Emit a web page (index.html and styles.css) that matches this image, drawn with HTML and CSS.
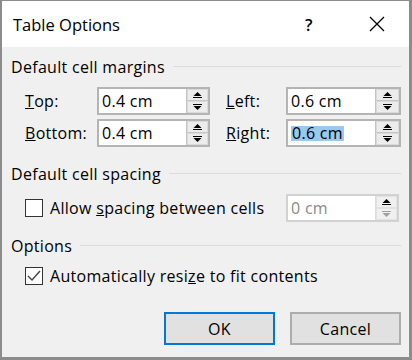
FILE: index.html
```html
<!DOCTYPE html>
<html>
<head>
<meta charset="utf-8">
<link rel="stylesheet" href="styles.css">
</head>
<body>
<div class="window">
  <div class="titlebar">
    <span class="title">Table Options</span>
    <span class="help">?</span>
    <span class="close">
      <svg width="16" height="16" viewBox="0 0 16 16"><path d="M1 1 L15 15 M15 1 L1 15" stroke="#000" stroke-width="1.3" fill="none"/></svg>
    </span>
  </div>
  <div class="content">
    <div class="group-head"><span>Default cell margins</span><i class="rule"></i></div>
    <div class="margins">
      <label class="lbl"><u>T</u>op:</label>
      <div class="spin w113"><span class="val">0.4 cm</span><div class="spin-btns"><b class="up"><svg width="9" height="6" viewBox="0 0 9 6"><path d="M0.5 4 L4.5 0 L8.5 4 Z" fill="#000"/><rect x="0" y="5" width="9" height="1" fill="#000"/></svg></b><b class="down"><svg width="9" height="6" viewBox="0 0 9 6"><rect x="0" y="0" width="9" height="1" fill="#000"/><path d="M0.5 2 L4.5 6 L8.5 2 Z" fill="#000"/></svg></b></div></div>
      <label class="lbl lbl2"><u>L</u>eft:</label>
      <div class="spin w115"><span class="val">0.6 cm</span><div class="spin-btns"><b class="up"><svg width="9" height="6" viewBox="0 0 9 6"><path d="M0.5 4 L4.5 0 L8.5 4 Z" fill="#000"/><rect x="0" y="5" width="9" height="1" fill="#000"/></svg></b><b class="down"><svg width="9" height="6" viewBox="0 0 9 6"><rect x="0" y="0" width="9" height="1" fill="#000"/><path d="M0.5 2 L4.5 6 L8.5 2 Z" fill="#000"/></svg></b></div></div>
      <label class="lbl"><u>B</u>ottom:</label>
      <div class="spin w113"><span class="val">0.4 cm</span><div class="spin-btns"><b class="up"><svg width="9" height="6" viewBox="0 0 9 6"><path d="M0.5 4 L4.5 0 L8.5 4 Z" fill="#000"/><rect x="0" y="5" width="9" height="1" fill="#000"/></svg></b><b class="down"><svg width="9" height="6" viewBox="0 0 9 6"><rect x="0" y="0" width="9" height="1" fill="#000"/><path d="M0.5 2 L4.5 6 L8.5 2 Z" fill="#000"/></svg></b></div></div>
      <label class="lbl lbl2"><u>R</u>ight:</label>
      <div class="spin w115 focused"><span class="val"><span class="sel">0.6 cm</span></span><div class="spin-btns"><b class="up"><svg width="9" height="6" viewBox="0 0 9 6"><path d="M0.5 4 L4.5 0 L8.5 4 Z" fill="#000"/><rect x="0" y="5" width="9" height="1" fill="#000"/></svg></b><b class="down"><svg width="9" height="6" viewBox="0 0 9 6"><rect x="0" y="0" width="9" height="1" fill="#000"/><path d="M0.5 2 L4.5 6 L8.5 2 Z" fill="#000"/></svg></b></div></div>
    </div>

    <div class="group-head g2"><span>Default cell spacing</span><i class="rule"></i></div>
    <div class="check-row">
      <span class="checkbox"></span>
      <span class="check-label">Allow <u>s</u>pacing between cells</span>
      <div class="spin w113 disabled"><span class="val">0 cm</span><div class="spin-btns"><b class="up"><svg width="9" height="6" viewBox="0 0 9 6"><path d="M0.5 4 L4.5 0 L8.5 4 Z" fill="#000"/><rect x="0" y="5" width="9" height="1" fill="#000"/></svg></b><b class="down"><svg width="9" height="6" viewBox="0 0 9 6"><rect x="0" y="0" width="9" height="1" fill="#a0a0a0"/><path d="M0.5 2 L4.5 6 L8.5 2 Z" fill="#a0a0a0"/></svg></b></div></div>
    </div>

    <div class="group-head g3"><span>Options</span><i class="rule"></i></div>
    <div class="check-row r2">
      <span class="checkbox checked"><svg width="14" height="12" viewBox="0 0 14 12"><path d="M1 6 L5 10 L13 1" stroke="#444" stroke-width="1.4" fill="none"/></svg></span>
      <span class="check-label">Automatically resi<u>z</u>e to fit contents</span>
    </div>

    <div class="buttons">
      <button class="btn default">OK</button>
      <button class="btn">Cancel</button>
    </div>
  </div>
</div>
</body>
</html>
```

FILE: styles.css
```css
* { box-sizing: border-box; }
html, body { margin: 0; padding: 0; }
body {
  width: 412px;
  height: 360px;
  font-family: "Open Sans", "Noto Sans", sans-serif;
  font-size: 16px;
  letter-spacing: 0.3px;
  color: #000;
  background: #fff;
}
.window {
  width: 412px;
  height: 360px;
  border: 1px solid #8c8c8c;
  border-left-width: 2px;
  border-right-width: 3px;
  border-bottom-width: 3px;
  display: flex;
  flex-direction: column;
}
.titlebar {
  height: 46px;
  background: #fff;
  display: flex;
  align-items: center;
  padding-left: 11px;
}
.title {
  font-size: 16.5px;
  letter-spacing: 0;
  flex: 1;
}
.help {
  font-size: 16.5px;
  font-weight: 600;
  width: 14px;
  margin-right: 50px;
}
.close {
  width: 16px;
  height: 16px;
  margin-right: 24px;
  display: flex;
}
.content {
  flex: 1;
  background: #f0f0f0;
  padding: 10px 8px 0 9px;
}
.group-head {
  display: flex;
  align-items: center;
  height: 20px;
  line-height: 20px;
}
.group-head .rule {
  flex: 1;
  height: 1px;
  background: #dcdcdc;
  margin-left: 8px;
  margin-top: -2px;
}
.margins {
  display: grid;
  grid-template-columns: 72px 113px 76px 115px;
  row-gap: 4px;
  margin-top: 10px;
  padding-left: 14px;
}
.lbl {
  display: flex;
  align-items: center;
  height: 28px;
}
.lbl2 { margin-left: 16px; }
.spin {
  height: 28px;
  border: 2px solid #b4b4b4;
  background: #fff;
  display: flex;
}
.w113 { width: 113px; }
.w115 { width: 115px; }
.spin .val {
  flex: 1;
  display: flex;
  align-items: center;
  padding-left: 3px;
}
.sel {
  background: #99c9ef;
  padding: 0 1px;
  line-height: 15px;
}
.spin-btns {
  width: 22px;
  display: flex;
  flex-direction: column;
  border-left: 1px solid #c4c4c4;
}
.spin-btns b {
  flex: 1;
  background: #ececec;
  border: 1px solid #dadada;
  display: flex;
  align-items: center;
  justify-content: center;
}
.spin-btns .up { border-bottom: 1px solid #c4c4c4; }
.w115 .spin-btns { width: 24px; }
.spin.disabled {
  border-color: #d2d2d2;
}
.spin.disabled .val { color: #8a8a8a; }
.spin.disabled .spin-btns { border-left-color: #dcdcdc; }
.spin.disabled .spin-btns b { background: #f0f0f0; border-color: #e2e2e2; }
.g2 { margin-top: 17px; }
.g3 { margin-top: 14px; }
.check-row {
  display: flex;
  align-items: center;
  height: 28px;
  margin-top: 10px;
  padding-left: 14px;
}
.check-row.r2 { margin-top: 6px; }
.checkbox {
  width: 18px;
  height: 18px;
  border: 1.5px solid #333;
  background: #fff;
  margin-right: 7px;
  display: flex;
  align-items: center;
  justify-content: center;
  flex: none;
}
.check-label { flex: 1; }
.check-row .spin { margin-right: 2px; }
.buttons {
  display: flex;
  justify-content: flex-end;
  gap: 15px;
  margin-top: 22px;
}
.btn {
  width: 111px;
  height: 33px;
  font-family: inherit;
  font-size: 16px;
  letter-spacing: 0.3px;
  color: #000;
  background: #e1e1e1;
  border: 2px solid #adadad;
  padding: 0;
}
.btn.default {
  border-color: #0078d7;
}
```
